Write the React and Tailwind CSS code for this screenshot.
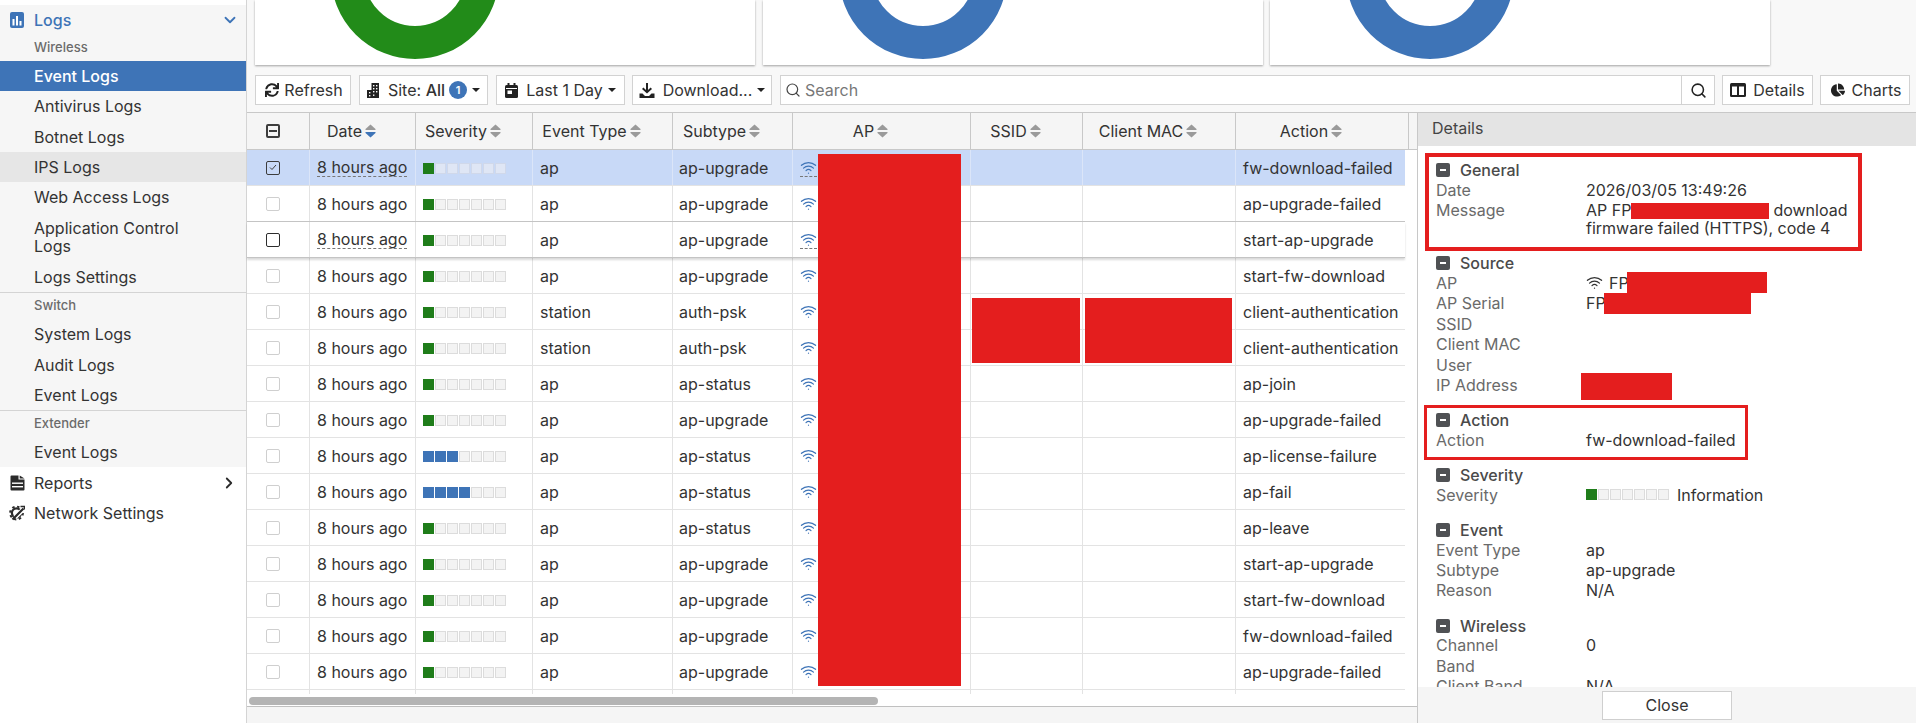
import { Search, Wifi, ChevronDown, ChevronRight } from 'lucide-react';
import { FaSync, FaChartPie } from 'react-icons/fa';

const ROWS = [
  { type: 'ap', sub: 'ap-upgrade', action: 'fw-download-failed', sev: 1, selected: true, dashed: true },
  { type: 'ap', sub: 'ap-upgrade', action: 'ap-upgrade-failed', sev: 1, aboveHover: true },
  { type: 'ap', sub: 'ap-upgrade', action: 'start-ap-upgrade', sev: 1, hover: true, dashed: true },
  { type: 'ap', sub: 'ap-upgrade', action: 'start-fw-download', sev: 1 },
  { type: 'station', sub: 'auth-psk', action: 'client-authentication', sev: 1 },
  { type: 'station', sub: 'auth-psk', action: 'client-authentication', sev: 1 },
  { type: 'ap', sub: 'ap-status', action: 'ap-join', sev: 1 },
  { type: 'ap', sub: 'ap-upgrade', action: 'ap-upgrade-failed', sev: 1 },
  { type: 'ap', sub: 'ap-status', action: 'ap-license-failure', sev: 3 },
  { type: 'ap', sub: 'ap-status', action: 'ap-fail', sev: 4 },
  { type: 'ap', sub: 'ap-status', action: 'ap-leave', sev: 1 },
  { type: 'ap', sub: 'ap-upgrade', action: 'start-ap-upgrade', sev: 1 },
  { type: 'ap', sub: 'ap-upgrade', action: 'start-fw-download', sev: 1 },
  { type: 'ap', sub: 'ap-upgrade', action: 'fw-download-failed', sev: 1 },
  { type: 'ap', sub: 'ap-upgrade', action: 'ap-upgrade-failed', sev: 1 },
];

const COL_W = ['w-[63px]', 'w-[106px]', 'w-[117px]', 'w-[140px]', 'w-[120px]', 'w-[178px]', 'w-[112px]', 'w-[153px]', 'w-[169px]'];

function LogsIcon() {
  return (
    <svg width="14" height="16" viewBox="0 0 14 16">
      <rect width="14" height="16" rx="2" fill="#3e74b7" />
      <rect x="2.5" y="7" width="2" height="6.5" fill="#fff" />
      <rect x="6" y="4" width="2" height="9.5" fill="#fff" />
      <rect x="9.5" y="9" width="2" height="4.5" fill="#fff" />
    </svg>
  );
}

function ReportsIcon() {
  return (
    <svg width="15" height="16" viewBox="0 0 15 16">
      <path d="M0.5 1.5 Q0.5 0.5 1.5 0.5 H8.5 V4.5 H14.5 V14.5 Q14.5 15.5 13.5 15.5 H1.5 Q0.5 15.5 0.5 14.5 Z" fill="#2b2b2b" />
      <path d="M9.7 0.5 L14.5 3.4 H9.7 Z" fill="#2b2b2b" />
      <rect x="2" y="7.5" width="11" height="1.4" fill="#fff" />
      <rect x="2" y="11" width="11" height="1.4" fill="#fff" />
    </svg>
  );
}

function NetworkIcon() {
  return (
    <svg width="16" height="16" viewBox="0 0 16 16" fill="none">
      <circle cx="7.5" cy="8" r="4.6" stroke="#2b2b2b" strokeWidth="2.2" />
      <circle cx="7.5" cy="8" r="6.4" stroke="#2b2b2b" strokeWidth="2" strokeDasharray="2.4 2.6" />
      <path d="M16 2.5 L6 12.5" stroke="#fff" strokeWidth="4.5" />
      <path d="M14.5 3.5 L7 11 M7 11 L3.5 14.5" stroke="#2b2b2b" strokeWidth="2.2" />
      <path d="M11.5 1.5 h4 v3" stroke="#2b2b2b" strokeWidth="1.6" />
    </svg>
  );
}

function BuildingIcon() {
  return (
    <svg width="12" height="15" viewBox="0 0 12 15">
      <path d="M4.5 0 H12 V15 H0 V7 H4.5 Z" fill="#222" />
      <g fill="#fff">
        <rect x="6" y="2" width="1.4" height="1.4" />
        <rect x="9" y="2" width="1.4" height="1.4" />
        <rect x="6" y="5" width="1.4" height="1.4" />
        <rect x="9" y="5" width="1.4" height="1.4" />
        <rect x="6" y="8" width="1.4" height="1.4" />
        <rect x="9" y="8" width="1.4" height="1.4" />
        <rect x="2" y="9" width="1.4" height="1.4" />
        <rect x="2" y="12" width="1.4" height="1.4" />
        <rect x="6" y="11.5" width="1.4" height="1.4" />
      </g>
    </svg>
  );
}

function CalendarIcon() {
  return (
    <svg width="13" height="15" viewBox="0 0 13 15">
      <rect y="2" width="13" height="13" rx="1.5" fill="#222" />
      <rect x="2.5" width="2" height="3.5" fill="#222" />
      <rect x="8.5" width="2" height="3.5" fill="#222" />
      <rect x="1" y="5" width="11" height="1" fill="#fff" />
      <rect x="2.5" y="7.5" width="4.5" height="3.5" fill="#fff" />
    </svg>
  );
}

function DownloadIcon() {
  return (
    <svg width="16" height="15" viewBox="0 0 16 15">
      <path d="M7 0 H9 V7 L11.6 4.6 L13 6 L8 10.6 L3 6 L4.4 4.6 L7 7 Z" fill="#222" />
      <path d="M0.5 10.5 H3.5 L6 13 H10 L12.5 10.5 H15.5 V15 H0.5 Z" fill="#222" />
    </svg>
  );
}

function ColumnsIcon() {
  return (
    <svg width="16" height="14" viewBox="0 0 16 14">
      <rect width="16" height="14" rx="1.5" fill="#222" />
      <rect x="2" y="3.5" width="5" height="8.5" fill="#fff" />
      <rect x="9" y="3.5" width="5" height="8.5" fill="#fff" />
    </svg>
  );
}

function SortIcon({ active }) {
  return (
    <svg width="11" height="14" viewBox="0 0 11 14" className="ml-[3px] shrink-0">
      <path d="M5.5 0.5 L10.5 5 Q11 6 10 6 H1 Q0 6 0.5 5 Z" fill="#9a9a9a" />
      <path d="M5.5 13.5 L10.5 9 Q11 8 10 8 H1 Q0 8 0.5 9 Z" fill={active ? '#3e74b7' : '#9a9a9a'} />
    </svg>
  );
}

function Caret() {
  return <span className="ml-[5px] w-0 h-0 border-x-[4px] border-x-transparent border-t-[4px] border-t-[#222]" />;
}

function Toggle() {
  return (
    <span className="w-[14px] h-[14px] rounded-[2px] bg-[#4f5154] flex items-center justify-center shrink-0">
      <span className="w-[6px] h-[2px] bg-white" />
    </span>
  );
}

function Severity({ level, selected }) {
  const onColor = level >= 3 ? 'bg-[#3e74b7]' : 'bg-[#1f7d1a]';
  const offColor = selected ? 'bg-[#dfe6f5] border-[#d0d8ea]' : 'bg-[#f3f3f3] border-[#dcdcdc]';
  return (
    <span className="flex gap-[1px]">
      {[0, 1, 2, 3, 4, 5, 6].map(i => (
        <span key={i} className={`w-[11px] h-[11px] border ${i < level ? `${onColor} border-transparent` : offColor}`} />
      ))}
    </span>
  );
}

function NavItem({ children, className = '' }) {
  return <div className={`h-[30px] pl-[34px] flex items-center text-[#333] ${className}`}>{children}</div>;
}

function GroupLabel({ children }) {
  return <div className="h-[26px] pl-[34px] flex items-center text-[13px] font-medium text-[#6b6b6b]">{children}</div>;
}

function Sidebar() {
  return (
    <aside className="w-[247px] shrink-0 h-full bg-white border-r border-[#d4d4d4] pt-[5px]">
      <div className="bg-[#f6f6f6]">
        <div className="h-[30px] pl-[10px] pr-[7px] flex items-center text-[#3e74b7] font-medium">
          <LogsIcon />
          <span className="ml-[10px] flex-1">Logs</span>
          <ChevronDown size={18} strokeWidth={2.4} color="#3e74b7" />
        </div>
        <GroupLabel>Wireless</GroupLabel>
        <NavItem className="bg-[#3e74b7] !text-white font-medium">Event Logs</NavItem>
        <NavItem>Antivirus Logs</NavItem>
        <NavItem className="h-[31px]">Botnet Logs</NavItem>
        <NavItem className="bg-[#e6e6e6]">IPS Logs</NavItem>
        <NavItem>Web Access Logs</NavItem>
        <div className="h-[50px] pl-[34px] flex items-center leading-[18px] text-[#333]">Application Control<br />Logs</div>
        <NavItem>Logs Settings</NavItem>
        <div className="border-t border-[#d4d4d4]">
          <GroupLabel>Switch</GroupLabel>
          <NavItem>System Logs</NavItem>
          <NavItem className="h-[31px]">Audit Logs</NavItem>
          <NavItem>Event Logs</NavItem>
        </div>
        <div className="border-t border-[#d4d4d4]">
          <GroupLabel>Extender</GroupLabel>
          <NavItem>Event Logs</NavItem>
        </div>
      </div>
      <div className="h-[31px] pl-[10px] pr-[8px] flex items-center text-[#333]">
        <ReportsIcon />
        <span className="ml-[9px] flex-1">Reports</span>
        <ChevronRight size={18} strokeWidth={2.4} color="#2b2b2b" />
      </div>
      <div className="h-[30px] pl-[9px] flex items-center text-[#333]">
        <NetworkIcon />
        <span className="ml-[9px]">Network Settings</span>
      </div>
    </aside>
  );
}

function ChartCard({ color }) {
  return (
    <div className="flex-1 bg-white shadow-[0_1px_2px_rgba(0,0,0,0.35)]">
      <svg width="500" height="65" viewBox="0 0 500 65">
        <circle cx="160" cy="-25" r="67.5" fill="none" stroke={color} strokeWidth="33" />
      </svg>
    </div>
  );
}

function ToolButton({ className = '', children }) {
  return (
    <button className={`h-[30px] shrink-0 bg-white border border-[#d2d2d2] flex items-center justify-center text-[#333] ${className}`}>
      {children}
    </button>
  );
}

function Toolbar() {
  return (
    <div className="mt-[10px] h-[30px] pl-[8px] flex">
      <ToolButton className="w-[96px] gap-[5px] pl-[2px]"><FaSync size={14} color="#222" />Refresh</ToolButton>
      <ToolButton className="w-[129px] ml-[8px]">
        <BuildingIcon />
        <span className="ml-[9px]">Site: <span className="font-medium">All</span></span>
        <span className="ml-[4px] w-[18px] h-[18px] rounded-full bg-[#3e74b7] text-white text-[11px] font-semibold flex items-center justify-center">1</span>
        <Caret />
      </ToolButton>
      <ToolButton className="w-[129px] ml-[8px]">
        <CalendarIcon />
        <span className="ml-[8px]">Last 1 Day</span>
        <Caret />
      </ToolButton>
      <ToolButton className="w-[140px] ml-[7px]">
        <DownloadIcon />
        <span className="ml-[8px]">Download...</span>
        <Caret />
      </ToolButton>
      <div className="w-[935px] ml-[8px] h-[30px] bg-white border border-[#d2d2d2] flex items-center">
        <Search size={16} strokeWidth={1.8} color="#444" className="ml-[4px]" />
        <span className="ml-[4px] flex-1 text-[#777]">Search</span>
        <span className="w-[33px] h-full border-l border-[#d2d2d2] flex items-center justify-center">
          <Search size={17} strokeWidth={2.2} color="#222" />
        </span>
      </div>
      <ToolButton className="w-[91px] ml-[7px] gap-[7px]"><ColumnsIcon />Details</ToolButton>
      <ToolButton className="w-[90px] ml-[7px] gap-[7px] pl-[2px]"><FaChartPie size={14} color="#222" />Charts</ToolButton>
    </div>
  );
}

function HeaderCell({ w, label, active }) {
  return (
    <div className={`${w} shrink-0 h-full border-r border-[#c8c8c8] pr-[22px] flex items-center justify-center font-normal text-[#333]`}>
      {label}
      <SortIcon active={active} />
    </div>
  );
}

function CheckBox({ kind }) {
  if (kind === 'minus') {
    return (
      <span className="w-[14px] h-[14px] border-2 border-[#3d3d3d] rounded-[2px] flex items-center justify-center">
        <span className="w-[8px] h-[2px] bg-[#3d3d3d]" />
      </span>
    );
  }
  if (kind === 'checked') {
    return (
      <span className="w-[14px] h-[14px] border-[1.5px] border-[#3d3d3d] rounded-[2px] flex items-center justify-center">
        <svg width="8" height="7" viewBox="0 0 8 7" fill="none"><path d="M1 3.5 L3 5.5 L7 1" stroke="#3d3d3d" strokeWidth="1" /></svg>
      </span>
    );
  }
  if (kind === 'dark') return <span className="w-[14px] h-[14px] border-[1.5px] border-[#2d2d2d] rounded-[2px] bg-white" />;
  return <span className="w-[14px] h-[14px] border-[1.5px] border-[#cfcfcf] rounded-[2px] bg-white" />;
}

function Row({ row }) {
  const line = row.hover || row.aboveHover ? 'border-[#c4c4c4]' : 'border-[#e3e3e3]';
  const bg = row.selected ? 'bg-[#c8d9f7]' : 'bg-white';
  const shadow = row.hover ? 'relative shadow-[0_2px_2px_rgba(0,0,0,0.15)]' : '';
  const cell = 'shrink-0 h-full border-r flex items-center';
  const cellLine = row.selected ? 'border-[#dbe5f8]' : 'border-[#e3e3e3]';
  return (
    <div className={`h-[36px] w-[1158px] flex border-b ${line} ${bg} ${shadow}`}>
      <div className={`${COL_W[0]} ${cell} ${cellLine} pr-[10px] justify-center`}>
        <CheckBox kind={row.selected ? 'checked' : row.hover ? 'dark' : 'plain'} />
      </div>
      <div className={`${COL_W[1]} ${cell} ${cellLine} pl-[7px]`}>
        <span className={row.dashed ? 'border-b border-dashed border-[#777] leading-[18px]' : 'leading-[18px]'}>8 hours ago</span>
      </div>
      <div className={`${COL_W[2]} ${cell} ${cellLine} pl-[7px] pt-[1px]`}><Severity level={row.sev} selected={row.selected} /></div>
      <div className={`${COL_W[3]} ${cell} ${cellLine} pl-[7px] pt-[1px]`}>{row.type}</div>
      <div className={`${COL_W[4]} ${cell} ${cellLine} pl-[6px] pt-[1px]`}>{row.sub}</div>
      <div className={`${COL_W[5]} ${cell} ${cellLine} pl-[7px]`}>
        <span className={row.dashed ? 'border-b border-dashed border-[#777]' : ''}>
          <Wifi size={17} strokeWidth={1.7} color="#3e74b7" className="block" />
        </span>
      </div>
      <div className={`${COL_W[6]} ${cell} ${cellLine}`} />
      <div className={`${COL_W[7]} ${cell} ${cellLine}`} />
      <div className={`${COL_W[8]} h-full flex items-center pl-[7px] pt-[1px] whitespace-nowrap overflow-hidden`}>{row.action}</div>
    </div>
  );
}

function LogTable() {
  return (
    <div className="w-[1170px] shrink-0 relative flex flex-col bg-white">
      <div className="h-[37px] flex bg-[#f5f5f5] border-b border-[#c8c8c8]">
        <div className={`${COL_W[0]} shrink-0 h-full border-r border-[#c8c8c8] pr-[10px] flex items-center justify-center`}><CheckBox kind="minus" /></div>
        <HeaderCell w={COL_W[1]} label="Date" active />
        <HeaderCell w={COL_W[2]} label="Severity" />
        <HeaderCell w={COL_W[3]} label="Event Type" />
        <HeaderCell w={COL_W[4]} label="Subtype" />
        <HeaderCell w={COL_W[5]} label="AP" />
        <HeaderCell w={COL_W[6]} label="SSID" />
        <HeaderCell w={COL_W[7]} label="Client MAC" />
        <HeaderCell w="w-[173px]" label="Action" />
      </div>
      {ROWS.map((row, i) => <Row key={i} row={row} />)}
      <div className="h-[4px] flex">
        {COL_W.slice(0, 8).map((w, i) => <div key={i} className={`${w} h-full border-r border-[#e3e3e3]`} />)}
      </div>
      <div className="h-[13px] border-b border-[#c0c0c0] pl-[2px] pt-[3px]">
        <div className="w-[629px] h-[8px] rounded-full bg-[#b4b4b4]" />
      </div>
      <div className="flex-1 bg-[#f5f5f5]" />

      {/* redaction blocks lying over the table */}
      <div className="absolute left-[571px] top-[41px] w-[143px] h-[532px] bg-[#e41e1e]" />
      <div className="absolute left-[725px] top-[185px] w-[108px] h-[65px] bg-[#e41e1e]" />
      <div className="absolute left-[838px] top-[185px] w-[147px] h-[65px] bg-[#e41e1e]" />
    </div>
  );
}

function Section({ title, children }) {
  return (
    <section className="mb-[15.5px]">
      <div className="h-[19px] flex items-center gap-[10px] font-medium text-[#4a4a4a]">
        <Toggle />
        {title}
      </div>
      {children}
    </section>
  );
}

function Field({ label, children }) {
  return (
    <div className="flex min-h-[20.4px] items-start py-[1.2px] leading-[18px]">
      <div className="w-[150px] shrink-0 text-[#6a6a6a]">{label}</div>
      <div className="w-[280px] text-[#333]">{children}</div>
    </div>
  );
}

function DetailsPanel() {
  return (
    <div className="flex-1 relative flex flex-col border-l border-[#c8c8c8] bg-white">
      <div className="h-[33px] shrink-0 bg-[#e4e4e4] pl-[14px] pb-[3px] flex items-center text-[#444]">Details</div>
      <div className="flex-1 overflow-hidden pl-[18px] pt-[14.5px]">
        <Section title="General">
          <Field label="Date">2026/03/05 13:49:26</Field>
          <Field label="Message">AP FP<span className="inline-block w-[142px]" />download firmware failed (HTTPS), code 4</Field>
        </Section>
        <Section title="Source">
          <Field label="AP"><span className="flex items-center gap-[6px]"><Wifi size={17} strokeWidth={1.8} color="#333" />FP</span></Field>
          <Field label="AP Serial">FP</Field>
          <Field label="SSID" />
          <Field label="Client MAC" />
          <Field label="User" />
          <Field label="IP Address" />
        </Section>
        <Section title="Action">
          <Field label="Action">fw-download-failed</Field>
        </Section>
        <Section title="Severity">
          <Field label="Severity">
            <span className="flex items-center gap-[8px]"><Severity level={1} />Information</span>
          </Field>
        </Section>
        <Section title="Event">
          <Field label="Event Type">ap</Field>
          <Field label="Subtype">ap-upgrade</Field>
          <Field label="Reason">N/A</Field>
        </Section>
        <Section title="Wireless">
          <Field label="Channel">0</Field>
          <Field label="Band" />
          <Field label="Client Band">N/A</Field>
        </Section>
      </div>
      <div className="h-[36px] shrink-0 bg-[#f5f5f5] flex items-center justify-center">
        <button className="w-[130px] h-[29px] bg-white border border-[#cfcfcf] text-[#333]">Close</button>
      </div>

      {/* highlight boxes and redactions lying over the panel */}
      <div className="absolute left-[7px] top-[40px] w-[437px] h-[98px] border-4 border-[#e41e1e]" />
      <div className="absolute left-[6px] top-[292px] w-[324px] h-[55px] border-[3.5px] border-[#e41e1e]" />
      <div className="absolute left-[213px] top-[90px] w-[138px] h-[16px] bg-[#e41e1e]" />
      <div className="absolute left-[209px] top-[159px] w-[140px] h-[21px] bg-[#e41e1e]" />
      <div className="absolute left-[186px] top-[180px] w-[147px] h-[21px] bg-[#e41e1e]" />
      <div className="absolute left-[163px] top-[260px] w-[91px] h-[27px] bg-[#e41e1e]" />
    </div>
  );
}

export default function App() {
  return (
    <div className="w-[1916px] h-[723px] flex overflow-hidden bg-white text-[16px] text-[#333] font-['Inter',sans-serif]">
      <Sidebar />
      <main className="flex-1 min-w-0 flex flex-col bg-[#f8f8f8]">
        <div className="h-[65px] shrink-0 pl-[8px] flex gap-[7.5px] w-[1523px]">
          <ChartCard color="#228b19" />
          <ChartCard color="#3e74b7" />
          <ChartCard color="#3e74b7" />
        </div>
        <Toolbar />
        <div className="mt-[7px] flex-1 min-h-0 flex border-t border-[#c8c8c8]">
          <LogTable />
          <DetailsPanel />
        </div>
      </main>
    </div>
  );
}
